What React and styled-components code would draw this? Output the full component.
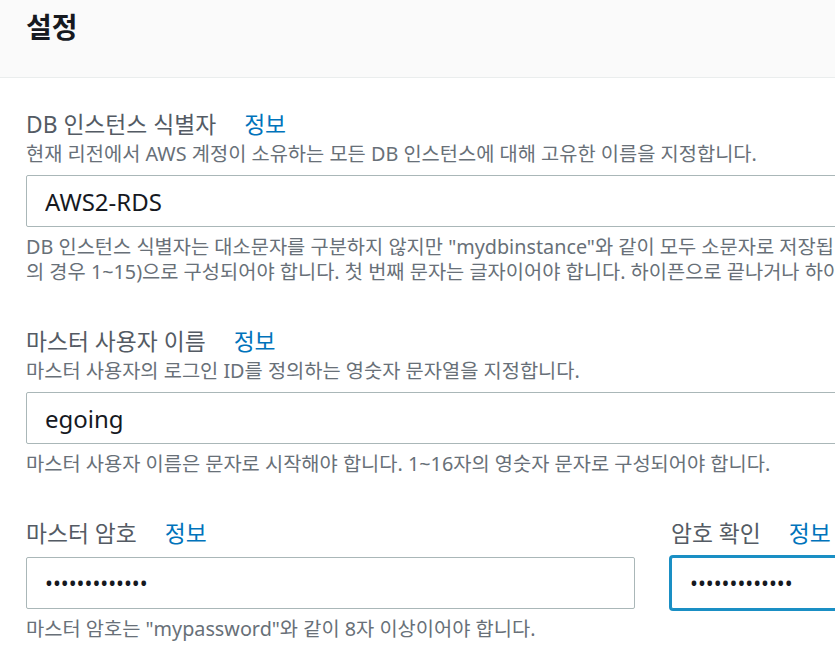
import React from 'react';
import styled, { createGlobalStyle } from 'styled-components';


const GlobalStyle = createGlobalStyle`

    html, body {
        margin:     0;
        padding:    0;
        overflow:   hidden;
        background: #ffffff;
    }

    body {
        font-family: "Noto Sans", "Noto Sans CJK KR", sans-serif;
        color:       #16191f;
    }

`;


const Page = styled.div`

    width:      1300px;
    min-height: 653px;

`;


const Header = styled.header`

    height:           78px;
    box-sizing:       border-box;
    padding:          9px 26px 0;
    background:       #fafafa;
    border-bottom:    1px solid #eaeded;

`;


const Title = styled.h2`

    margin:       0;
    font-size:    28px;
    line-height:  36px;
    font-weight:  bold;
    color:        #16191f;

`;


const Body = styled.div`

    display:        flex;
    flex-direction: column;
    gap:            43px;
    padding:        32px 26px 0;

`;


const Field = styled.div`

    display:        flex;
    flex-direction: column;
    min-width:      0;

`;


const Row = styled.div`

    display:                grid;
    grid-template-columns:  609px 609px;
    column-gap:             36px;

`;


const Label = styled.div`

    font-size:    22.8px;
    line-height:  30px;
    color:        #545b64;
    white-space:  nowrap;

`;


const InfoLink = styled.a`

    margin-left:      28px;
    color:            #0073bb;
    text-decoration:  none;

`;


const Description = styled.div`

    font-size:    19.8px;
    line-height:  27px;
    color:        #687078;
    white-space:  nowrap;

`;


const Input = styled.input`

    box-sizing:     border-box;
    width:          100%;
    height:         52px;
    margin-top:     8px;
    padding:        0 18px;
    font-family:    inherit;
    font-size:      ${ p => p.type === 'password' ? '21px' : '24px' };
    color:          #16191f;
    background:     #ffffff;
    border:         1px solid ${ p => p.$focused ? '#1a8fc4' : '#aab7b8' };
    border-radius:  2px;
    outline:        none;
    box-shadow:     ${ p => p.$focused ? '0 0 0 2px #1a8fc4' : 'none' };

`;


const Hint = styled.div`

    margin-top:   7px;
    font-size:    19.8px;
    line-height:  25px;
    color:        #687078;
    white-space:  nowrap;

`;


export default function App()
{
    return (

        <Page>

            <GlobalStyle />

            <Header>
                <Title>설정</Title>
            </Header>

            <Body>

                <Field>
                    <Label>
                        DB 인스턴스 식별자
                        <InfoLink href="#">정보</InfoLink>
                    </Label>
                    <Description>
                        현재 리전에서 AWS 계정이 소유하는 모든 DB 인스턴스에 대해 고유한 이름을 지정합니다.
                    </Description>
                    <Input type="text" value="AWS2-RDS" readOnly />
                    <Hint>
                        <div>DB 인스턴스 식별자는 대소문자를 구분하지 않지만 "mydbinstance"와 같이 모두 소문자로 저장됩니다. 제약: 1~60자의 영숫자 또는 하이픈(SQL Server</div>
                        <div>의 경우 1~15)으로 구성되어야 합니다. 첫 번째 문자는 글자이어야 합니다. 하이픈으로 끝나거나 하이픈이 연속으로 2개 와서는 안 됩니다.</div>
                    </Hint>
                </Field>

                <Field>
                    <Label>
                        마스터 사용자 이름
                        <InfoLink href="#">정보</InfoLink>
                    </Label>
                    <Description>
                        마스터 사용자의 로그인 ID를 정의하는 영숫자 문자열을 지정합니다.
                    </Description>
                    <Input type="text" value="egoing" readOnly />
                    <Hint>
                        마스터 사용자 이름은 문자로 시작해야 합니다. 1~16자의 영숫자 문자로 구성되어야 합니다.
                    </Hint>
                </Field>

                <Row>

                    <Field>
                        <Label>
                            마스터 암호
                            <InfoLink href="#">정보</InfoLink>
                        </Label>
                        <Input type="password" value="egoing1234567" readOnly />
                        <Hint>
                            마스터 암호는 "mypassword"와 같이 8자 이상이어야 합니다.
                        </Hint>
                    </Field>

                    <Field>
                        <Label>
                            암호 확인
                            <InfoLink href="#">정보</InfoLink>
                        </Label>
                        <Input type="password" value="egoing1234567" readOnly $focused />
                    </Field>

                </Row>

            </Body>

        </Page>

    );
}
